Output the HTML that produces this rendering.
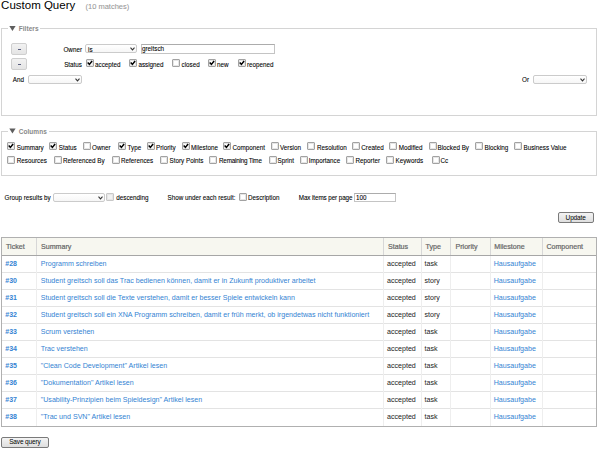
<!DOCTYPE html>
<html><head><meta charset="utf-8"><title>Custom Query</title>
<style>
html,body{margin:0;padding:0;background:#fff;}
body{width:600px;height:450px;position:relative;overflow:hidden;font-family:"Liberation Sans",sans-serif;}
.t{position:absolute;white-space:nowrap;-webkit-text-stroke:0.08px currentColor;}
.r{position:absolute;}
.cb{position:absolute;width:8px;height:8px;box-sizing:border-box;border:1px solid #a2a2a2;border-radius:1px;background:#fff;box-shadow:inset 0 0 0 1px #e6e6e6;}
.cb.dis{border-color:#c8c8c8;background:#f2f2f2;}
.sel{position:absolute;box-sizing:border-box;border:1px solid #cbcbcb;border-radius:2px;background:linear-gradient(#fff,#f6f6f6);}
.inp{position:absolute;box-sizing:border-box;border:1px solid #c4c4c4;border-top-color:#acacac;background:#fff;}
.btn{position:absolute;box-sizing:border-box;border:1px solid #7a7a7a;border-radius:2px;background:linear-gradient(#f4f4f4,#dedede);}
.mbtn{position:absolute;box-sizing:border-box;border:1px solid #cfcfcf;border-radius:2px;background:linear-gradient(#f2f2f2,#e4e4e4);}
</style></head><body>
<div class="t" style="left:1.10px;top:0px;font-size:11.5px;line-height:11.5px;color:#000;-webkit-text-stroke:0;">Custom Query</div>
<div class="t" style="left:85.50px;top:3px;font-size:7.5px;line-height:7.5px;color:#999;">(10 matches)</div>
<div class="r" style="left:1px;top:28px;width:596px;height:88px;border:1px solid #d4d4d4;box-sizing:border-box;"></div>
<div class="r" style="left:8px;top:26px;width:32px;height:4px;background:#fff;"></div>
<svg class="r" style="left:9px;top:26px" width="7" height="7" viewBox="0 0 7 7"><path d="M0.3 0.1 L6.6 0.1 L3.45 5.0 Z" fill="#5e5e5e"/></svg>
<div class="t" style="left:18.70px;top:26px;font-size:6.5px;line-height:6.5px;color:#888;font-weight:bold;-webkit-text-stroke:0;letter-spacing:0.05px;">Filters</div>
<div class="mbtn" style="left:11px;top:43px;width:16px;height:12px"></div>
<div class="r" style="left:17.7px;top:48.7px;width:3.6px;height:1.1px;background:#5a5f80;"></div>
<div class="mbtn" style="left:11px;top:58px;width:16px;height:12px"></div>
<div class="r" style="left:17.7px;top:63.7px;width:3.6px;height:1.1px;background:#5a5f80;"></div>
<div class="t" style="right:518.00px;top:47px;font-size:6.3px;line-height:6.3px;color:#000;">Owner</div>
<div class="sel" style="left:85px;top:44px;width:52px;height:9px"><svg width="5" height="4" viewBox="0 0 5 4" style="position:absolute;right:1.2px;top:2.4px"><path d="M0.5 0.7 L2.5 2.9 L4.5 0.7" stroke="#333" stroke-width="1.05" fill="none"/></svg></div>
<div class="t" style="left:88.00px;top:47px;font-size:6.3px;line-height:6.3px;color:#000;">is</div>
<div class="inp" style="left:141px;top:44px;width:134px;height:10px"></div>
<div class="t" style="left:142.00px;top:46px;font-size:6.3px;line-height:6.3px;color:#000;">greitsch</div>
<div class="t" style="right:518.00px;top:62px;font-size:6.3px;line-height:6.3px;color:#000;">Status</div>
<div class="cb" style="left:86px;top:59px"><svg width="8" height="8" viewBox="0 0 8 8" style="position:absolute;left:-1px;top:-1px"><path d="M1.7 3.5 L3.4 5.4 L6.1 2.0" stroke="#000" stroke-width="1.5" fill="none"/></svg></div>
<div class="t" style="left:95.00px;top:62px;font-size:6.3px;line-height:6.3px;color:#000;">accepted</div>
<div class="cb" style="left:129px;top:59px"><svg width="8" height="8" viewBox="0 0 8 8" style="position:absolute;left:-1px;top:-1px"><path d="M1.7 3.5 L3.4 5.4 L6.1 2.0" stroke="#000" stroke-width="1.5" fill="none"/></svg></div>
<div class="t" style="left:138.40px;top:62px;font-size:6.3px;line-height:6.3px;color:#000;">assigned</div>
<div class="cb" style="left:172px;top:59px"></div>
<div class="t" style="left:181.50px;top:62px;font-size:6.3px;line-height:6.3px;color:#000;">closed</div>
<div class="cb" style="left:208px;top:59px"><svg width="8" height="8" viewBox="0 0 8 8" style="position:absolute;left:-1px;top:-1px"><path d="M1.7 3.5 L3.4 5.4 L6.1 2.0" stroke="#000" stroke-width="1.5" fill="none"/></svg></div>
<div class="t" style="left:217.00px;top:62px;font-size:6.3px;line-height:6.3px;color:#000;">new</div>
<div class="cb" style="left:238px;top:59px"><svg width="8" height="8" viewBox="0 0 8 8" style="position:absolute;left:-1px;top:-1px"><path d="M1.7 3.5 L3.4 5.4 L6.1 2.0" stroke="#000" stroke-width="1.5" fill="none"/></svg></div>
<div class="t" style="left:247.00px;top:62px;font-size:6.3px;line-height:6.3px;color:#000;">reopened</div>
<div class="t" style="left:12.80px;top:77px;font-size:6.3px;line-height:6.3px;color:#000;">And</div>
<div class="sel" style="left:28px;top:75px;width:54px;height:9px"><svg width="5" height="4" viewBox="0 0 5 4" style="position:absolute;right:1.2px;top:2.4px"><path d="M0.5 0.7 L2.5 2.9 L4.5 0.7" stroke="#333" stroke-width="1.05" fill="none"/></svg></div>
<div class="t" style="left:522.00px;top:77px;font-size:6.3px;line-height:6.3px;color:#000;">Or</div>
<div class="sel" style="left:533px;top:75px;width:54px;height:9px"><svg width="5" height="4" viewBox="0 0 5 4" style="position:absolute;right:1.2px;top:2.4px"><path d="M0.5 0.7 L2.5 2.9 L4.5 0.7" stroke="#333" stroke-width="1.05" fill="none"/></svg></div>
<div class="r" style="left:1px;top:131px;width:596px;height:45px;border:1px solid #d4d4d4;box-sizing:border-box;"></div>
<div class="r" style="left:8px;top:129px;width:41px;height:4px;background:#fff;"></div>
<svg class="r" style="left:9px;top:128px" width="7" height="7" viewBox="0 0 7 7"><path d="M0.3 0.5 L6.6 0.5 L3.45 5.4 Z" fill="#5e5e5e"/></svg>
<div class="t" style="left:18.70px;top:129px;font-size:6.5px;line-height:6.5px;color:#888;font-weight:bold;-webkit-text-stroke:0;letter-spacing:0.05px;">Columns</div>
<div class="cb" style="left:7px;top:142px"><svg width="8" height="8" viewBox="0 0 8 8" style="position:absolute;left:-1px;top:-1px"><path d="M1.7 3.5 L3.4 5.4 L6.1 2.0" stroke="#000" stroke-width="1.5" fill="none"/></svg></div>
<div class="t" style="left:16.70px;top:145px;font-size:6.3px;line-height:6.3px;color:#000;">Summary</div>
<div class="cb" style="left:49px;top:142px"><svg width="8" height="8" viewBox="0 0 8 8" style="position:absolute;left:-1px;top:-1px"><path d="M1.7 3.5 L3.4 5.4 L6.1 2.0" stroke="#000" stroke-width="1.5" fill="none"/></svg></div>
<div class="t" style="left:58.70px;top:145px;font-size:6.3px;line-height:6.3px;color:#000;">Status</div>
<div class="cb" style="left:83px;top:142px"></div>
<div class="t" style="left:92.00px;top:145px;font-size:6.3px;line-height:6.3px;color:#000;">Owner</div>
<div class="cb" style="left:118px;top:142px"><svg width="8" height="8" viewBox="0 0 8 8" style="position:absolute;left:-1px;top:-1px"><path d="M1.7 3.5 L3.4 5.4 L6.1 2.0" stroke="#000" stroke-width="1.5" fill="none"/></svg></div>
<div class="t" style="left:127.50px;top:145px;font-size:6.3px;line-height:6.3px;color:#000;">Type</div>
<div class="cb" style="left:147px;top:142px"><svg width="8" height="8" viewBox="0 0 8 8" style="position:absolute;left:-1px;top:-1px"><path d="M1.7 3.5 L3.4 5.4 L6.1 2.0" stroke="#000" stroke-width="1.5" fill="none"/></svg></div>
<div class="t" style="left:156.00px;top:145px;font-size:6.3px;line-height:6.3px;color:#000;">Priority</div>
<div class="cb" style="left:182px;top:142px"><svg width="8" height="8" viewBox="0 0 8 8" style="position:absolute;left:-1px;top:-1px"><path d="M1.7 3.5 L3.4 5.4 L6.1 2.0" stroke="#000" stroke-width="1.5" fill="none"/></svg></div>
<div class="t" style="left:191.00px;top:145px;font-size:6.3px;line-height:6.3px;color:#000;">Milestone</div>
<div class="cb" style="left:223px;top:142px"><svg width="8" height="8" viewBox="0 0 8 8" style="position:absolute;left:-1px;top:-1px"><path d="M1.7 3.5 L3.4 5.4 L6.1 2.0" stroke="#000" stroke-width="1.5" fill="none"/></svg></div>
<div class="t" style="left:232.50px;top:145px;font-size:6.3px;line-height:6.3px;color:#000;">Component</div>
<div class="cb" style="left:271px;top:142px"></div>
<div class="t" style="left:280.00px;top:145px;font-size:6.3px;line-height:6.3px;color:#000;">Version</div>
<div class="cb" style="left:307px;top:142px"></div>
<div class="t" style="left:317.00px;top:145px;font-size:6.3px;line-height:6.3px;color:#000;">Resolution</div>
<div class="cb" style="left:352px;top:142px"></div>
<div class="t" style="left:361.25px;top:145px;font-size:6.3px;line-height:6.3px;color:#000;">Created</div>
<div class="cb" style="left:389px;top:142px"></div>
<div class="t" style="left:398.75px;top:145px;font-size:6.3px;line-height:6.3px;color:#000;">Modified</div>
<div class="cb" style="left:429px;top:142px"></div>
<div class="t" style="left:437.50px;top:145px;font-size:6.3px;line-height:6.3px;color:#000;">Blocked By</div>
<div class="cb" style="left:475px;top:142px"></div>
<div class="t" style="left:484.50px;top:145px;font-size:6.3px;line-height:6.3px;color:#000;">Blocking</div>
<div class="cb" style="left:514px;top:142px"></div>
<div class="t" style="left:523.50px;top:145px;font-size:6.3px;line-height:6.3px;color:#000;">Business Value</div>
<div class="cb" style="left:7px;top:156px"></div>
<div class="t" style="left:16.70px;top:158px;font-size:6.3px;line-height:6.3px;color:#000;">Resources</div>
<div class="cb" style="left:54px;top:156px"></div>
<div class="t" style="left:63.00px;top:158px;font-size:6.3px;line-height:6.3px;color:#000;">Referenced By</div>
<div class="cb" style="left:112px;top:156px"></div>
<div class="t" style="left:121.00px;top:158px;font-size:6.3px;line-height:6.3px;color:#000;">References</div>
<div class="cb" style="left:160px;top:156px"></div>
<div class="t" style="left:169.50px;top:158px;font-size:6.3px;line-height:6.3px;color:#000;">Story Points</div>
<div class="cb" style="left:209px;top:156px"></div>
<div class="t" style="left:219.00px;top:158px;font-size:6.3px;line-height:6.3px;color:#000;letter-spacing:-0.2px;">Remaining Time</div>
<div class="cb" style="left:269px;top:156px"></div>
<div class="t" style="left:277.50px;top:158px;font-size:6.3px;line-height:6.3px;color:#000;">Sprint</div>
<div class="cb" style="left:300px;top:156px"></div>
<div class="t" style="left:308.75px;top:158px;font-size:6.3px;line-height:6.3px;color:#000;">Importance</div>
<div class="cb" style="left:346px;top:156px"></div>
<div class="t" style="left:355.50px;top:158px;font-size:6.3px;line-height:6.3px;color:#000;">Reporter</div>
<div class="cb" style="left:386px;top:156px"></div>
<div class="t" style="left:395.50px;top:158px;font-size:6.3px;line-height:6.3px;color:#000;">Keywords</div>
<div class="cb" style="left:432px;top:156px"></div>
<div class="t" style="left:440.50px;top:158px;font-size:6.3px;line-height:6.3px;color:#000;">Cc</div>
<div class="t" style="left:4.50px;top:195px;font-size:6.3px;line-height:6.3px;color:#000;">Group results by</div>
<div class="sel" style="left:53px;top:193px;width:52px;height:9px"><svg width="5" height="4" viewBox="0 0 5 4" style="position:absolute;right:1.2px;top:2.4px"><path d="M0.5 0.7 L2.5 2.9 L4.5 0.7" stroke="#333" stroke-width="1.05" fill="none"/></svg></div>
<div class="cb dis" style="left:106px;top:193px"></div>
<div class="t" style="left:116.25px;top:195px;font-size:6.3px;line-height:6.3px;color:#000;">descending</div>
<div class="t" style="left:167.50px;top:195px;font-size:6.3px;line-height:6.3px;color:#000;">Show under each result:</div>
<div class="cb" style="left:239px;top:193px"></div>
<div class="t" style="left:248.00px;top:195px;font-size:6.3px;line-height:6.3px;color:#000;">Description</div>
<div class="t" style="left:298.75px;top:195px;font-size:6.3px;line-height:6.3px;color:#000;letter-spacing:-0.09px;">Max items per page</div>
<div class="inp" style="left:354px;top:193px;width:42px;height:9px"></div>
<div class="t" style="left:356.00px;top:195px;font-size:6.3px;line-height:6.3px;color:#000;">100</div>
<div class="btn" style="left:557.5px;top:212px;width:36.5px;height:11px"></div>
<div class="t" style="left:565.60px;top:215px;font-size:6.5px;line-height:6.5px;color:#000;letter-spacing:-0.15px;-webkit-text-stroke:0;">Update</div>
<div class="r" style="left:1px;top:237px;width:596px;height:18px;background:#f7f7f0;"></div>
<div class="r" style="left:1px;top:272px;width:596px;height:1px;background:#e3e3e3;"></div>
<div class="r" style="left:1px;top:289px;width:596px;height:1px;background:#e3e3e3;"></div>
<div class="r" style="left:1px;top:306px;width:596px;height:1px;background:#e3e3e3;"></div>
<div class="r" style="left:1px;top:323px;width:596px;height:1px;background:#e3e3e3;"></div>
<div class="r" style="left:1px;top:340px;width:596px;height:1px;background:#e3e3e3;"></div>
<div class="r" style="left:1px;top:357px;width:596px;height:1px;background:#e3e3e3;"></div>
<div class="r" style="left:1px;top:374px;width:596px;height:1px;background:#e3e3e3;"></div>
<div class="r" style="left:1px;top:391px;width:596px;height:1px;background:#e3e3e3;"></div>
<div class="r" style="left:1px;top:408px;width:596px;height:1px;background:#e3e3e3;"></div>
<div class="r" style="left:36px;top:237px;width:1px;height:18px;background:#d7d7d7;"></div>
<div class="r" style="left:36px;top:256px;width:1px;height:170px;background:#eeeeee;"></div>
<div class="r" style="left:383px;top:237px;width:1px;height:18px;background:#d7d7d7;"></div>
<div class="r" style="left:383px;top:256px;width:1px;height:170px;background:#eeeeee;"></div>
<div class="r" style="left:421px;top:237px;width:1px;height:18px;background:#d7d7d7;"></div>
<div class="r" style="left:421px;top:256px;width:1px;height:170px;background:#eeeeee;"></div>
<div class="r" style="left:450px;top:237px;width:1px;height:18px;background:#d7d7d7;"></div>
<div class="r" style="left:450px;top:256px;width:1px;height:170px;background:#eeeeee;"></div>
<div class="r" style="left:490px;top:237px;width:1px;height:18px;background:#d7d7d7;"></div>
<div class="r" style="left:490px;top:256px;width:1px;height:170px;background:#eeeeee;"></div>
<div class="r" style="left:542px;top:237px;width:1px;height:18px;background:#d7d7d7;"></div>
<div class="r" style="left:542px;top:256px;width:1px;height:170px;background:#eeeeee;"></div>
<div class="r" style="left:1px;top:255px;width:596px;height:1px;background:#a6a6a6;"></div>
<div class="r" style="left:1px;top:237px;width:596px;height:190px;border:1px solid #b0b0b0;box-sizing:border-box;"></div>
<div class="t" style="left:6.00px;top:244px;font-size:7.1px;line-height:7.1px;color:#666;-webkit-text-stroke:0.2px #666;">Ticket</div>
<div class="t" style="left:41.00px;top:244px;font-size:7.1px;line-height:7.1px;color:#666;-webkit-text-stroke:0.2px #666;">Summary</div>
<div class="t" style="left:388.00px;top:244px;font-size:7.1px;line-height:7.1px;color:#666;-webkit-text-stroke:0.2px #666;">Status</div>
<div class="t" style="left:425.50px;top:244px;font-size:7.1px;line-height:7.1px;color:#666;-webkit-text-stroke:0.2px #666;">Type</div>
<div class="t" style="left:455.50px;top:244px;font-size:7.1px;line-height:7.1px;color:#666;-webkit-text-stroke:0.2px #666;">Priority</div>
<div class="t" style="left:494.25px;top:244px;font-size:7.1px;line-height:7.1px;color:#666;-webkit-text-stroke:0.2px #666;">Milestone</div>
<div class="t" style="left:546.40px;top:244px;font-size:7.1px;line-height:7.1px;color:#666;-webkit-text-stroke:0.2px #666;">Component</div>
<div class="t" style="left:5.30px;top:260px;font-size:7.0px;line-height:7.0px;color:#3483d3;font-weight:bold;-webkit-text-stroke:0;">#28</div>
<div class="t" style="left:40.70px;top:261px;font-size:7.1px;line-height:7.1px;color:#3483d3;-webkit-text-stroke:0;">Programm schreiben</div>
<div class="t" style="left:387.00px;top:261px;font-size:7.1px;line-height:7.1px;color:#222;-webkit-text-stroke:0;">accepted</div>
<div class="t" style="left:424.50px;top:261px;font-size:7.1px;line-height:7.1px;color:#222;-webkit-text-stroke:0;">task</div>
<div class="t" style="left:493.70px;top:261px;font-size:7.1px;line-height:7.1px;color:#3483d3;-webkit-text-stroke:0;">Hausaufgabe</div>
<div class="t" style="left:5.30px;top:277px;font-size:7.0px;line-height:7.0px;color:#3483d3;font-weight:bold;-webkit-text-stroke:0;">#30</div>
<div class="t" style="left:40.70px;top:278px;font-size:7.1px;line-height:7.1px;color:#3483d3;-webkit-text-stroke:0;">Student greitsch soll das Trac bedienen können, damit er in Zukunft produktiver arbeitet</div>
<div class="t" style="left:387.00px;top:278px;font-size:7.1px;line-height:7.1px;color:#222;-webkit-text-stroke:0;">accepted</div>
<div class="t" style="left:424.50px;top:278px;font-size:7.1px;line-height:7.1px;color:#222;-webkit-text-stroke:0;">story</div>
<div class="t" style="left:493.70px;top:278px;font-size:7.1px;line-height:7.1px;color:#3483d3;-webkit-text-stroke:0;">Hausaufgabe</div>
<div class="t" style="left:5.30px;top:294px;font-size:7.0px;line-height:7.0px;color:#3483d3;font-weight:bold;-webkit-text-stroke:0;">#31</div>
<div class="t" style="left:40.70px;top:295px;font-size:7.1px;line-height:7.1px;color:#3483d3;-webkit-text-stroke:0;">Student greitsch soll die Texte verstehen, damit er besser Spiele entwickeln kann</div>
<div class="t" style="left:387.00px;top:295px;font-size:7.1px;line-height:7.1px;color:#222;-webkit-text-stroke:0;">accepted</div>
<div class="t" style="left:424.50px;top:295px;font-size:7.1px;line-height:7.1px;color:#222;-webkit-text-stroke:0;">story</div>
<div class="t" style="left:493.70px;top:295px;font-size:7.1px;line-height:7.1px;color:#3483d3;-webkit-text-stroke:0;">Hausaufgabe</div>
<div class="t" style="left:5.30px;top:311px;font-size:7.0px;line-height:7.0px;color:#3483d3;font-weight:bold;-webkit-text-stroke:0;">#32</div>
<div class="t" style="left:40.70px;top:312px;font-size:7.1px;line-height:7.1px;color:#3483d3;-webkit-text-stroke:0;">Student greitsch soll ein XNA Programm schreiben, damit er früh merkt, ob irgendetwas nicht funktioniert</div>
<div class="t" style="left:387.00px;top:312px;font-size:7.1px;line-height:7.1px;color:#222;-webkit-text-stroke:0;">accepted</div>
<div class="t" style="left:424.50px;top:312px;font-size:7.1px;line-height:7.1px;color:#222;-webkit-text-stroke:0;">story</div>
<div class="t" style="left:493.70px;top:312px;font-size:7.1px;line-height:7.1px;color:#3483d3;-webkit-text-stroke:0;">Hausaufgabe</div>
<div class="t" style="left:5.30px;top:328px;font-size:7.0px;line-height:7.0px;color:#3483d3;font-weight:bold;-webkit-text-stroke:0;">#33</div>
<div class="t" style="left:40.70px;top:329px;font-size:7.1px;line-height:7.1px;color:#3483d3;-webkit-text-stroke:0;">Scrum verstehen</div>
<div class="t" style="left:387.00px;top:329px;font-size:7.1px;line-height:7.1px;color:#222;-webkit-text-stroke:0;">accepted</div>
<div class="t" style="left:424.50px;top:329px;font-size:7.1px;line-height:7.1px;color:#222;-webkit-text-stroke:0;">task</div>
<div class="t" style="left:493.70px;top:329px;font-size:7.1px;line-height:7.1px;color:#3483d3;-webkit-text-stroke:0;">Hausaufgabe</div>
<div class="t" style="left:5.30px;top:345px;font-size:7.0px;line-height:7.0px;color:#3483d3;font-weight:bold;-webkit-text-stroke:0;">#34</div>
<div class="t" style="left:40.70px;top:346px;font-size:7.1px;line-height:7.1px;color:#3483d3;-webkit-text-stroke:0;">Trac verstehen</div>
<div class="t" style="left:387.00px;top:346px;font-size:7.1px;line-height:7.1px;color:#222;-webkit-text-stroke:0;">accepted</div>
<div class="t" style="left:424.50px;top:346px;font-size:7.1px;line-height:7.1px;color:#222;-webkit-text-stroke:0;">task</div>
<div class="t" style="left:493.70px;top:346px;font-size:7.1px;line-height:7.1px;color:#3483d3;-webkit-text-stroke:0;">Hausaufgabe</div>
<div class="t" style="left:5.30px;top:362px;font-size:7.0px;line-height:7.0px;color:#3483d3;font-weight:bold;-webkit-text-stroke:0;">#35</div>
<div class="t" style="left:40.70px;top:363px;font-size:7.1px;line-height:7.1px;color:#3483d3;-webkit-text-stroke:0;">&quot;Clean Code Development&quot; Artikel lesen</div>
<div class="t" style="left:387.00px;top:363px;font-size:7.1px;line-height:7.1px;color:#222;-webkit-text-stroke:0;">accepted</div>
<div class="t" style="left:424.50px;top:363px;font-size:7.1px;line-height:7.1px;color:#222;-webkit-text-stroke:0;">task</div>
<div class="t" style="left:493.70px;top:363px;font-size:7.1px;line-height:7.1px;color:#3483d3;-webkit-text-stroke:0;">Hausaufgabe</div>
<div class="t" style="left:5.30px;top:379px;font-size:7.0px;line-height:7.0px;color:#3483d3;font-weight:bold;-webkit-text-stroke:0;">#36</div>
<div class="t" style="left:40.70px;top:380px;font-size:7.1px;line-height:7.1px;color:#3483d3;-webkit-text-stroke:0;">&quot;Dokumentation&quot; Artikel lesen</div>
<div class="t" style="left:387.00px;top:380px;font-size:7.1px;line-height:7.1px;color:#222;-webkit-text-stroke:0;">accepted</div>
<div class="t" style="left:424.50px;top:380px;font-size:7.1px;line-height:7.1px;color:#222;-webkit-text-stroke:0;">task</div>
<div class="t" style="left:493.70px;top:380px;font-size:7.1px;line-height:7.1px;color:#3483d3;-webkit-text-stroke:0;">Hausaufgabe</div>
<div class="t" style="left:5.30px;top:396px;font-size:7.0px;line-height:7.0px;color:#3483d3;font-weight:bold;-webkit-text-stroke:0;">#37</div>
<div class="t" style="left:40.70px;top:397px;font-size:7.1px;line-height:7.1px;color:#3483d3;-webkit-text-stroke:0;">&quot;Usability-Prinzipien beim Spieldesign&quot; Artikel lesen</div>
<div class="t" style="left:387.00px;top:397px;font-size:7.1px;line-height:7.1px;color:#222;-webkit-text-stroke:0;">accepted</div>
<div class="t" style="left:424.50px;top:397px;font-size:7.1px;line-height:7.1px;color:#222;-webkit-text-stroke:0;">task</div>
<div class="t" style="left:493.70px;top:397px;font-size:7.1px;line-height:7.1px;color:#3483d3;-webkit-text-stroke:0;">Hausaufgabe</div>
<div class="t" style="left:5.30px;top:413px;font-size:7.0px;line-height:7.0px;color:#3483d3;font-weight:bold;-webkit-text-stroke:0;">#38</div>
<div class="t" style="left:40.70px;top:414px;font-size:7.1px;line-height:7.1px;color:#3483d3;-webkit-text-stroke:0;">&quot;Trac und SVN&quot; Artikel lesen</div>
<div class="t" style="left:387.00px;top:414px;font-size:7.1px;line-height:7.1px;color:#222;-webkit-text-stroke:0;">accepted</div>
<div class="t" style="left:424.50px;top:414px;font-size:7.1px;line-height:7.1px;color:#222;-webkit-text-stroke:0;">task</div>
<div class="t" style="left:493.70px;top:414px;font-size:7.1px;line-height:7.1px;color:#3483d3;-webkit-text-stroke:0;">Hausaufgabe</div>
<div class="btn" style="left:1px;top:437px;width:48px;height:11px"></div>
<div class="t" style="left:9.20px;top:439px;font-size:6.5px;line-height:6.5px;color:#000;letter-spacing:-0.15px;-webkit-text-stroke:0;">Save query</div>
</body></html>
